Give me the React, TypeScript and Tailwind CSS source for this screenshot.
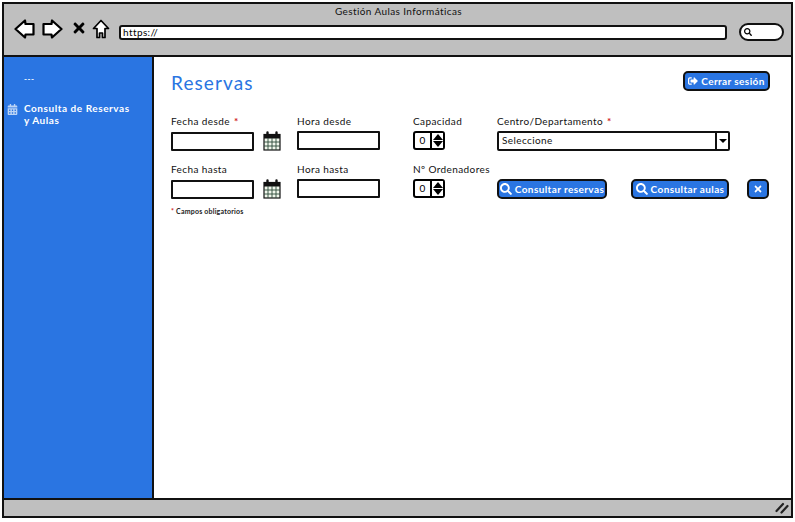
import type { ReactNode } from 'react'
import { FaCalendarAlt, FaSearch, FaSignOutAlt, FaTimes } from 'react-icons/fa'

const font = { fontFamily: '"Lato", "Liberation Sans", sans-serif' }

function Arrow({ flip }: { flip?: boolean }) {
  return (
    <svg width="21" height="20" viewBox="0 0 21 20" className={flip ? 'scale-x-[-1]' : ''}>
      <path d="M1.5 10 L11 1.5 L11.5 5 L19.5 5 L19.5 15.5 L11.5 15.5 L11 18.5 Z" fill="#fff" stroke="#000" strokeWidth="2.2" strokeLinejoin="round" />
    </svg>
  )
}

function HomeIcon() {
  return (
    <svg width="18" height="20" viewBox="0 0 18 20">
      <path d="M9 1.5 L16.5 9.5 L13 9.5 L13 18.5 L10.5 18.5 L10.5 14 L7.5 14 L7.5 18.5 L5 18.5 L5 9.5 L1.5 9.5 Z" fill="#fff" stroke="#000" strokeWidth="1.7" strokeLinejoin="round" />
    </svg>
  )
}

function CalendarIcon() {
  return (
    <svg width="18" height="20" viewBox="0 0 18 20">
      <rect x="1" y="3.5" width="16" height="15.5" fill="#f1f7ec" stroke="#111" strokeWidth="1.2" />
      <rect x="1" y="3.5" width="16" height="4" fill="#111" />
      <path d="M1 11 H17 M1 15 H17 M5 7 V19 M9 7 V19 M13 7 V19" stroke="#2c4a3a" strokeWidth="0.9" />
      <path d="M4.5 5 V1.5 M13.5 5 V1.5" stroke="#111" strokeWidth="2.4" strokeLinecap="round" />
    </svg>
  )
}

function Spinner() {
  return (
    <div className="flex h-[19px] w-[32px] rounded-[3px] border-2 border-black bg-white">
      <span className="flex-1 text-center text-[10px] leading-[15px]">0</span>
      <span className="flex w-[13px] flex-col items-center justify-center gap-[1px] border-l-2 border-black bg-white">
        <span className="h-0 w-0 border-x-[5px] border-b-[6px] border-x-transparent border-b-black" />
        <span className="h-0 w-0 border-x-[5px] border-t-[6px] border-x-transparent border-t-black" />
      </span>
    </div>
  )
}

function Label({ text, required }: { text: string; required?: boolean }) {
  return (
    <div className="mb-[2px] h-[16px] text-[10px] leading-[16px] tracking-[0.4px] text-[#111]">
      {text}
      {required && <span className="ml-[4px] font-bold text-[#d11a1a]">*</span>}
    </div>
  )
}

function TextBox({ className }: { className: string }) {
  return <div className={`h-[19px] rounded-[1px] border-2 border-[#111] bg-white ${className}`} />
}

function BlueButton({ className, icon, text }: { className: string; icon: ReactNode; text?: string }) {
  return (
    <button className={`flex h-[20px] items-center justify-center gap-[3px] rounded-[5px] border-2 border-[#111] bg-[#2a75e2] text-[10px] font-bold tracking-[0.4px] text-white ${className}`}>
      {icon}
      {text}
    </button>
  )
}

export default function App() {
  return (
    <div className="h-[522px] w-[795px] overflow-hidden bg-white pl-[2px] pr-[2px] pt-[2px]" style={font}>
      <div className="flex h-[516px] flex-col border-2 border-[#111]">
        <header className="h-[53px] shrink-0 border-b-2 border-[#111] bg-[#bfbfbf]">
          <div className="pl-[2px] pt-[1px] text-center text-[10px] leading-[13px] tracking-[0.4px] text-[#111]">Gestión Aulas Informáticas</div>
          <div className="flex items-start pl-[10px]">
            <span className="mt-[1px]"><Arrow /></span>
            <span className="ml-[7px] mt-[1px]"><Arrow flip /></span>
            <FaTimes className="ml-[8px] mt-[2px] text-[16px] text-black" />
            <span className="ml-[5px] mt-[1px]"><HomeIcon /></span>
            <div className="ml-[9px] mt-[7px] flex h-[15px] w-[608px] items-center rounded-[3px] border-2 border-[#111] bg-white pl-[2px] text-[10px] tracking-[0.4px] text-black">https://</div>
            <div className="ml-[12px] mt-[5px] flex h-[18px] w-[45px] items-center rounded-[9px] border-2 border-[#111] bg-white pl-[3px]">
              <FaSearch className="text-[8px] text-black" />
            </div>
          </div>
        </header>
        <div className="flex min-h-0 flex-1">
          <aside className="w-[150px] shrink-0 border-r-2 border-[#111] bg-[#2a75e2] pl-[3px] pt-[16px] text-[10px] font-bold leading-[12px] tracking-[0.55px] text-white">
            <div className="pl-[17px] text-[8px]">---</div>
            <div className="mt-[17px] flex gap-[6px]">
              <FaCalendarAlt className="mt-[2px] shrink-0 text-[11px] text-[#bcd4f5]" />
              <span>Consulta de Reservas<br />y Aulas</span>
            </div>
          </aside>
          <main className="min-w-0 flex-1 pl-[17px] pr-[21px] pt-[14px]">
            <div className="flex items-start justify-between">
              <h1 className="text-[19px] font-normal leading-[24px] tracking-[1.1px] text-[#2a75e2]">Reservas</h1>
              <BlueButton className="w-[87px]" icon={<FaSignOutAlt className="text-[10px]" />} text="Cerrar sesión" />
            </div>
            <div className="mt-[18px] grid grid-cols-[126px_116px_84px_1fr] gap-y-[10px]">
              <div>
                <Label text="Fecha desde" required />
                <div className="flex items-center gap-[9px]"><TextBox className="w-[83px]" /><CalendarIcon /></div>
              </div>
              <div><Label text="Hora desde" /><TextBox className="w-[83px]" /></div>
              <div><Label text="Capacidad" /><Spinner /></div>
              <div>
                <Label text="Centro/Departamento" required />
                <div className="flex h-[20px] w-[233px] rounded-[2px] border-2 border-[#111] bg-white">
                  <span className="flex-1 pl-[3px] text-[10px] leading-[14px] tracking-[0.4px] text-[#111]">Seleccione</span>
                  <span className="flex w-[13px] items-center justify-center border-l-2 border-[#111]">
                    <span className="h-0 w-0 border-x-[4px] border-t-[4px] border-x-transparent border-t-black" />
                  </span>
                </div>
              </div>
              <div>
                <Label text="Fecha hasta" />
                <div className="flex items-center gap-[9px]"><TextBox className="w-[83px]" /><CalendarIcon /></div>
              </div>
              <div><Label text="Hora hasta" /><TextBox className="w-[83px]" /></div>
              <div><Label text="Nº Ordenadores" /><Spinner /></div>
              <div className="flex items-end">
                <BlueButton className="w-[110px]" icon={<FaSearch className="text-[12px]" />} text="Consultar reservas" />
                <BlueButton className="ml-[24px] w-[98px]" icon={<FaSearch className="text-[12px]" />} text="Consultar aulas" />
                <BlueButton className="ml-[18px] w-[22px]" icon={<FaTimes className="text-[10px]" />} />
              </div>
            </div>
            <div className="mt-[7px] text-[7px] font-bold leading-[10px] tracking-[0.2px] text-[#222]">
              <span className="text-[#d11a1a]">*</span> Campos obligatorios
            </div>
          </main>
        </div>
        <footer className="flex h-[18px] shrink-0 items-center justify-end border-t-2 border-[#111] bg-[#bfbfbf] pr-[2px]">
          <svg width="14" height="12" viewBox="0 0 14 12">
            <path d="M1.5 9 L8 2 M6.5 10.5 L12.5 4" stroke="#222" strokeWidth="2.2" strokeLinecap="round" />
          </svg>
        </footer>
      </div>
    </div>
  )
}
